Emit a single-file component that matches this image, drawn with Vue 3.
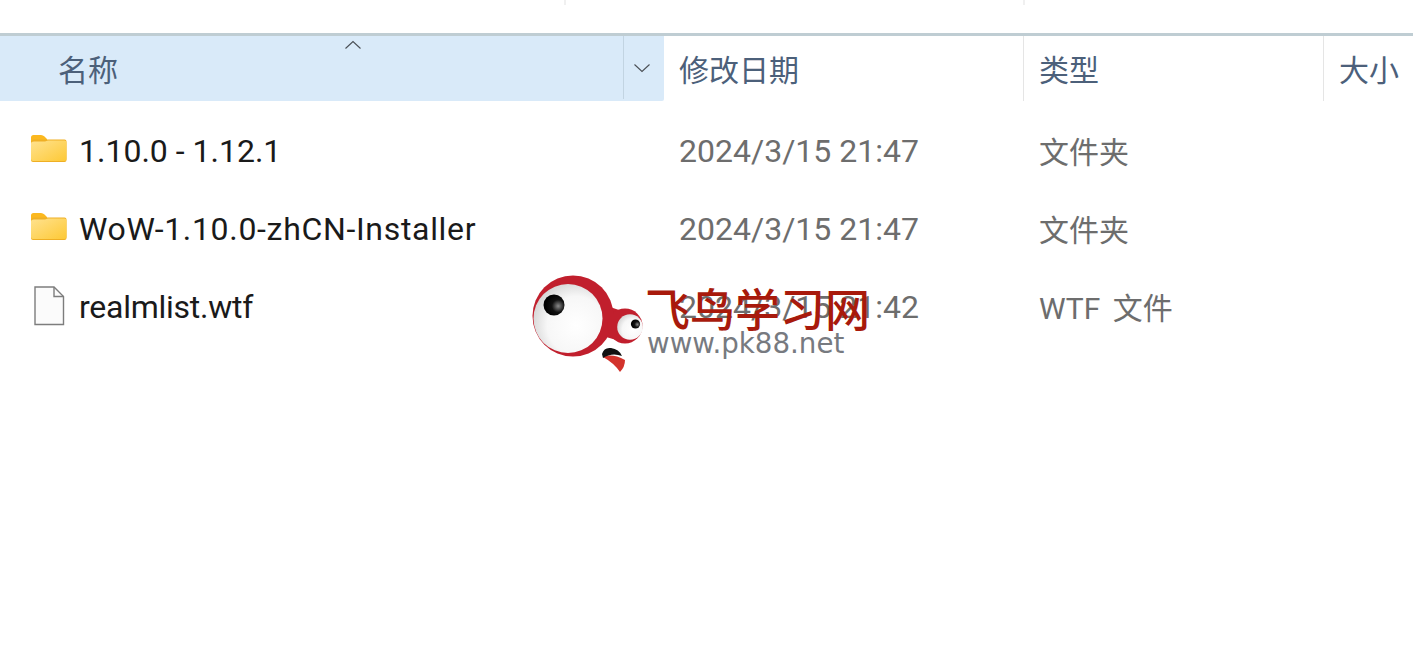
<template>
  <div class="explorer">
    <div class="top-strip">
      <span class="tick tick-a"></span>
      <span class="tick tick-b"></span>
    </div>

    <div class="header">
      <div class="head-name">
        <svg class="sort-arrow" width="18" height="10" viewBox="0 0 18 10">
          <path d="M1.5 8.5 L9 1.5 L16.5 8.5" fill="none" stroke="#4a4f55" stroke-width="1.1" />
        </svg>
        <span class="head-label">名称</span>
        <div class="head-drop">
          <svg width="18" height="10" viewBox="0 0 18 10">
            <path d="M1.5 1.5 L9 8.5 L16.5 1.5" fill="none" stroke="#4a4f55" stroke-width="1.1" />
          </svg>
        </div>
      </div>
      <div class="head-col col-date"><span class="head-label">修改日期</span></div>
      <div class="head-col col-type"><span class="head-label">类型</span></div>
      <div class="head-col col-size"><span class="head-label">大小</span></div>
    </div>

    <div class="rows">
      <div v-for="row in rows" :key="row.name" class="row">
        <div class="cell-name">
          <svg v-if="row.folder" class="icon" width="38" height="30" viewBox="0 2 38 30">
            <defs>
              <linearGradient id="folderFill" x1="0" y1="0" x2="1" y2="1">
                <stop offset="0" stop-color="#ffe28f" />
                <stop offset="1" stop-color="#fdc936" />
              </linearGradient>
            </defs>
            <path d="M1 4.5 Q1 2 3.5 2 H11 Q13 2 14.5 3.6 L17 6 V12 H1 Z" fill="#fbb81f" />
            <path d="M1 10 Q1 6.4 4 6.4 H34.5 Q36.5 6.4 36.5 8.4 V27 Q36.5 29 34.5 29 H3 Q1 29 1 27 Z" fill="#efaf24" />
            <path d="M1 11 Q1 8.6 4 8.6 H15 L18 7.4 H34.5 Q36.5 7.4 36.5 9.4 V26 Q36.5 28 34.5 28 H3 Q1 28 1 26 Z" fill="url(#folderFill)" />
          </svg>
          <svg v-else class="icon" width="38" height="40" viewBox="0 0 38 40">
            <path d="M5 1 H24 L33.5 10.5 V38.5 H5 Z" fill="#fbfbfb" stroke="#7d7d7d" stroke-width="1.4" />
            <path d="M24 1 V10.5 H33.5" fill="none" stroke="#7d7d7d" stroke-width="1.4" />
          </svg>
          <span class="name" :style="{ letterSpacing: row.spacing + 'px' }">{{ row.name }}</span>
        </div>
        <div class="cell cell-date col-date">{{ row.date }}</div>
        <div class="cell cell-type col-type">{{ row.type }}</div>
      </div>
    </div>

    <div class="watermark">
      <svg class="mascot" width="112" height="100" viewBox="0 0 112 100">
        <defs>
          <radialGradient id="eyeBig" cx="0.62" cy="0.6" r="0.7">
            <stop offset="0" stop-color="#ffffff" />
            <stop offset="0.6" stop-color="#f7f7f7" />
            <stop offset="1" stop-color="#cfcfcf" />
          </radialGradient>
          <radialGradient id="pupil" cx="0.7" cy="0.55" r="0.6">
            <stop offset="0" stop-color="#8a8a8a" />
            <stop offset="0.5" stop-color="#111111" />
            <stop offset="1" stop-color="#000000" />
          </radialGradient>
        </defs>
        <path d="M72 30 L90 36 L88 66 L74 62 Z" fill="#c11f2d" />
        <circle cx="41" cy="41" r="40.5" fill="#c11f2d" />
        <circle cx="36" cy="43.5" r="34.5" fill="url(#eyeBig)" />
        <circle cx="22" cy="30" r="10.5" fill="url(#pupil)" />
        <circle cx="93" cy="51" r="17.5" fill="#c11f2d" />
        <circle cx="98" cy="52" r="12.8" fill="url(#eyeBig)" />
        <circle cx="103.5" cy="49" r="4.6" fill="url(#pupil)" />
        <path d="M71 82 Q80 78 93 85 Q93 92 88 97 Q82 88 71 82 Z" fill="#d2332c" />
        <path d="M70 79 Q72 72 79 73 Q87 74 90 81 Q80 77 71 83 Z" fill="#111" />
      </svg>
      <div class="wm-title">飞鸟学习网</div>
      <div class="wm-url">www.pk88.net</div>
    </div>
  </div>
</template>

<script setup>
const rows = [
  { name: "1.10.0 - 1.12.1", date: "2024/3/15 21:47", type: "文件夹", folder: true, spacing: 0 },
  { name: "WoW-1.10.0-zhCN-Installer", date: "2024/3/15 21:47", type: "文件夹", folder: true, spacing: 0.68 },
  { name: "realmlist.wtf", date: "2024/3/15 21:42", type: "WTF 文件", folder: false, spacing: -0.25 },
]
</script>

<style>
html, body {
  background: #fff;
  overflow: hidden;
}
</style>

<style scoped>
.explorer {
  position: relative;
  width: 1413px;
  height: 646px;
  overflow: hidden;
  background: #fff;
  font-family: Roboto, "Noto Sans CJK SC", sans-serif;
}

.top-strip {
  height: 33px;
  display: flex;
}

.tick {
  width: 2px;
  height: 5px;
  background: #f0f0f0;
}

.tick-a {
  margin-left: 564px;
}

.tick-b {
  margin-left: 457px;
}

.header {
  display: flex;
  height: 65px;
  border-top: 3px solid #bfcdd3;
}

.head-name {
  position: relative;
  width: 664px;
  display: flex;
  align-items: center;
  padding: 0 0 2px 58px;
  box-sizing: border-box;
  background: #d9eaf9;
  border-bottom-right-radius: 2px;
}

.sort-arrow {
  position: absolute;
  left: 344px;
  top: 4px;
}

.head-drop {
  position: absolute;
  right: 0;
  top: 0;
  bottom: 2px;
  width: 31px;
  padding-left: 9px;
  border-left: 1px solid #c2d4e2;
  display: flex;
  align-items: center;
}

.head-label {
  font-family: "Noto Sans CJK SC", sans-serif;
  font-size: 30px;
  line-height: 1;
  color: #4c607a;
}

.head-col {
  display: flex;
  align-items: center;
  box-sizing: border-box;
  padding-bottom: 2px;
  border-right: 1px solid #e5e5e5;
}

.head-col.col-size {
  border-right: none;
}

.col-date {
  width: 360px;
  padding-left: 15px;
  box-sizing: border-box;
}

.col-type {
  width: 300px;
  padding-left: 15px;
  box-sizing: border-box;
}

.col-size {
  flex: 1;
  padding-left: 15px;
}

.rows {
  padding-top: 10px;
}

.row {
  display: flex;
  height: 78px;
  align-items: center;
}

.cell-name {
  width: 664px;
  display: flex;
  align-items: center;
  padding-left: 30px;
  box-sizing: border-box;
}

.icon {
  width: 38px;
  flex: none;
}

.name {
  margin-left: 11px;
  padding-top: 2px;
  font-size: 32px;
  color: #1a1a1a;
  white-space: nowrap;
}

.cell {
  color: #6d6d6d;
  white-space: nowrap;
}

.cell-date {
  padding-top: 2px;
  font-size: 32px;
}

.cell-type {
  font-size: 30px;
  word-spacing: 5px;
}

.watermark {
  position: absolute;
  left: 532px;
  top: 275px;
  width: 345px;
  height: 100px;
}

.mascot {
  position: absolute;
  left: 0;
  top: 0;
}

.wm-title {
  position: absolute;
  left: 113px;
  top: 10px;
  font-family: "Noto Sans CJK SC", sans-serif;
  font-size: 45px;
  font-weight: 500;
  line-height: 1;
  color: #a81a0c;
  white-space: nowrap;
}

.wm-url {
  position: absolute;
  left: 115px;
  top: 52px;
  font-family: "DejaVu Sans", sans-serif;
  font-size: 27.7px;
  line-height: 1.2;
  color: #777a80;
  white-space: nowrap;
}
</style>
